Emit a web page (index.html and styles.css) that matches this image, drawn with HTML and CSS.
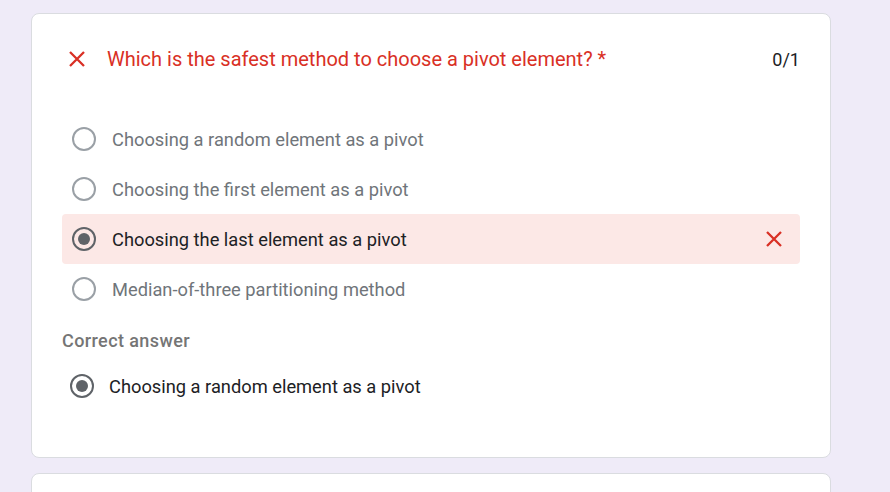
FILE: index.html
```html
<!DOCTYPE html>
<html>
<head>
<meta charset="utf-8">
<link rel="stylesheet" href="styles.css">
</head>
<body>
<div class="page">
  <div class="card">
    <div class="head">
      <svg class="xicon" viewBox="0 0 18 18" width="18" height="18"><path d="M2 2L16 16M16 2L2 16" stroke="#d93025" stroke-width="2.3" fill="none"/></svg>
      <div class="title">Which is the safest method to choose a pivot element? *</div>
      <div class="score">0/1</div>
    </div>
    <div class="options">
      <div class="opt"><span class="radio"></span><span class="label">Choosing a random element as a pivot</span></div>
      <div class="opt"><span class="radio"></span><span class="label">Choosing the first element as a pivot</span></div>
      <div class="opt wrong"><span class="radio on"></span><span class="label">Choosing the last element as a pivot</span>
        <svg class="xsmall" viewBox="0 0 18 18" width="18" height="18"><path d="M2 2L16 16M16 2L2 16" stroke="#d93025" stroke-width="2.3" fill="none"/></svg>
      </div>
      <div class="opt"><span class="radio"></span><span class="label">Median-of-three partitioning method</span></div>
    </div>
    <div class="correct-title">Correct answer</div>
    <div class="correct"><span class="radio on"></span><span class="label dark">Choosing a random element as a pivot</span></div>
  </div>
  <div class="card next"></div>
</div>
</body>
</html>
```
FILE: styles.css
```css
html, body { margin: 0; padding: 0; }
body {
  background: #efebf8;
  font-family: Roboto, "Liberation Sans", Arial, sans-serif;
  width: 890px; height: 492px; overflow: hidden;
}
.page { padding-top: 13px; padding-left: 31px; display: flex; flex-direction: column; gap: 15px; }
.card {
  width: 800px;
  background: #fff;
  border: 1px solid #dadce0;
  border-radius: 8px;
  box-sizing: border-box;
  padding: 0 30px 0 30px;
  height: 445px;
  flex: none;
}
.card.next { height: 60px; }
.head { display: flex; align-items: center; height: 24px; margin-top: 33px; padding-left: 6px; }
.xicon { flex: none; }
.title { color: #d93025; font-size: 20px; margin-left: 21px; flex: 1; }
.score { color: #202124; font-size: 18px; }
.options { margin-top: 43px; display: flex; flex-direction: column; }
.opt { height: 50px; display: flex; align-items: center; padding-left: 10px; border-radius: 4px; }
.opt.wrong { background: #fce8e6; }
.radio { width: 24px; height: 24px; border: 2px solid #9aa0a6; border-radius: 50%; box-sizing: border-box; flex: none; position: relative; }
.radio.on { border-color: #5f6368; }
.radio.on::after { content: ""; position: absolute; left: 4px; top: 4px; width: 12px; height: 12px; border-radius: 50%; background: #5f6368; }
.label { margin-left: 16px; font-size: 18.3px; color: #70757a; flex: 1; }
.opt.wrong .label, .label.dark { color: #202124; }
.xsmall { margin-right: 17px; flex: none; }
.correct-title { margin-top: 16px; font-size: 18px; font-weight: 500; color: #757575; letter-spacing: 0.4px; }
.correct { display: flex; align-items: center; margin-top: 23px; padding-left: 8px; height: 24px; }
.correct .label { margin-left: 15px; }
```
